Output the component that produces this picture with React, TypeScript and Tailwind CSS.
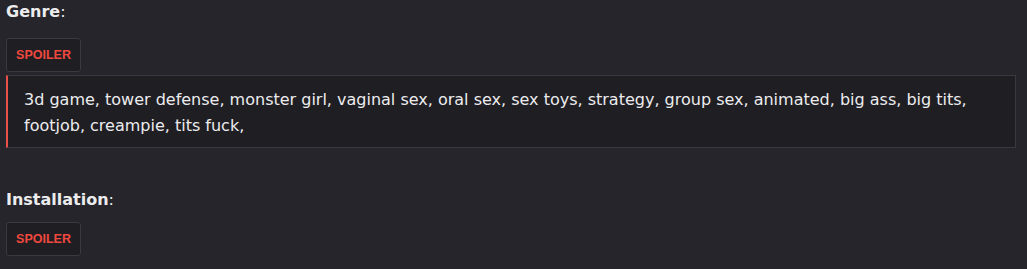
export default function App() {
  const tags =
    "3d game, tower defense, monster girl, vaginal sex, oral sex, sex toys, strategy, group sex, animated, big ass, big tits, footjob, creampie, tits fuck,";

  return (
    <div className="min-h-[269px] w-full bg-[#26252b] px-[6px] pt-[1px] font-['DejaVu_Sans',Verdana,sans-serif] text-[#ececee]">
      {/* Genre */}
      <div className="text-[16px] leading-[22px]">
        <b className="font-bold">Genre</b>:
      </div>
      <div className="mt-[15px]">
        <button className="h-[34px] w-[75px] rounded-[3px] border border-[#3a393f] bg-[#1f1e23] font-['Liberation_Sans',Arial,sans-serif] text-[12.5px] font-bold text-[#f0483e]">
          SPOILER
        </button>
      </div>
      <div className="mr-[5px] mt-[3px] border border-l-2 border-[#3a393f] border-l-[#e8514a] bg-[#1f1e23] pb-[8px] pl-[16px] pr-[20px] pt-[11px] text-[16px] leading-[26px]">
        {tags}
      </div>

      {/* Installation */}
      <div className="mt-[41px] text-[16px] leading-[22px]">
        <b className="font-bold">Installation</b>:
      </div>
      <div className="mt-[11px]">
        <button className="h-[34px] w-[75px] rounded-[3px] border border-[#3a393f] bg-[#1f1e23] font-['Liberation_Sans',Arial,sans-serif] text-[12.5px] font-bold text-[#f0483e]">
          SPOILER
        </button>
      </div>
    </div>
  );
}
